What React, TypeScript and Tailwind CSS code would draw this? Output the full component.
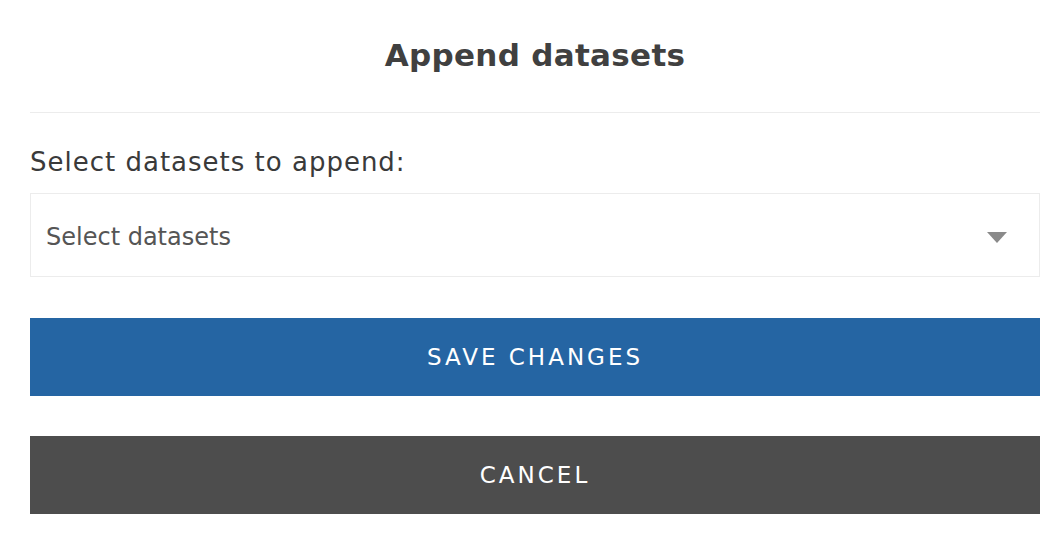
export default function App() {
  return (
    <div className="min-h-screen bg-white pl-[30px] pr-[20px] font-['DejaVu_Sans',sans-serif] text-[#3d3d3d]">
      <div className="flex h-[113px] items-center justify-center border-b border-[#ececec] pb-[2px]">
        <h1 className="text-[31px] font-bold tracking-[0.3px] text-[#404040]">Append datasets</h1>
      </div>

      <label className="mt-[33px] block text-[26px] leading-[32px] tracking-[1px] text-[#3a3a3a]">Select datasets to append:</label>

      <div className="mt-[15px] flex h-[84px] items-center justify-between border border-[#ececec] pl-[15px] pr-[32px]">
        <span className="mt-[3px] text-[24px] text-[#555555]">Select datasets</span>
        <svg width="20" height="11" viewBox="0 0 20 11" className="mt-[4px]">
          <polygon points="0,0 20,0 10,11" fill="#8a8a8a" />
        </svg>
      </div>

      <button className="mt-[41px] flex h-[78px] w-full items-center justify-center bg-[#2565a3] text-[23px] tracking-[3px] text-white">
        SAVE CHANGES
      </button>

      <button className="mt-[40px] flex h-[78px] w-full items-center justify-center bg-[#4d4d4d] text-[23px] tracking-[3px] text-white">
        CANCEL
      </button>
    </div>
  )
}
